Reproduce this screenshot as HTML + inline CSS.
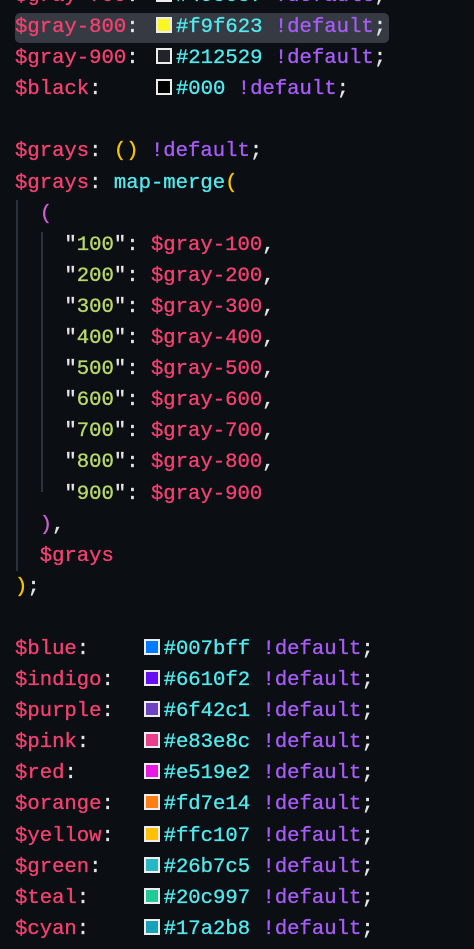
<!DOCTYPE html>
<html><head><meta charset="utf-8"><style>
html,body{margin:0;padding:0;background:#0b0f14;width:474px;height:949px;overflow:hidden}
#c{position:absolute;left:0;top:-19px;width:474px;font-family:"Liberation Mono",monospace;font-size:20.6px;color:#e4e4e4;-webkit-text-stroke:0.35px currentColor}
.l{height:31.1px;line-height:31.1px;white-space:pre;padding-left:15px;position:relative}
.p{color:#f2416f}.c{color:#52e8ec}.u{color:#a65cf5}.y{color:#f7c600}.g{color:#b8d86a}.m{color:#c95ecd}.w{color:#e4e4e4}
.s{display:inline-block;width:12px;height:12px;border:2px solid #ececec;vertical-align:-1px;margin-left:5px;margin-right:4px;-webkit-text-stroke:0}
.hl{position:absolute;left:15px;top:32px;width:374px;height:30px;background:#363b43;border-radius:5px}
.g1{position:absolute;left:16px;top:219px;width:2px;height:371px;background:#2a323c}
.g2{position:absolute;left:41px;top:251px;width:2px;height:260px;background:#2a323c}
</style></head><body><div id="c">
<div class="hl"></div><div class="g1"></div><div class="g2"></div>
<div class="l"><span class="p">$gray-700</span>: <span class="s" style="background:#495057"></span><span class="c">#495057</span> <span class="u">!default</span>;</div>
<div class="l"><span class="p">$gray-800</span>: <span class="s" style="background:#f9f623"></span><span class="c">#f9f623</span> <span class="u">!default</span>;</div>
<div class="l"><span class="p">$gray-900</span>: <span class="s" style="background:#212529"></span><span class="c">#212529</span> <span class="u">!default</span>;</div>
<div class="l"><span class="p">$black</span>:    <span class="s" style="background:#000"></span><span class="c">#000</span> <span class="u">!default</span>;</div>
<div class="l"> </div>
<div class="l"><span class="p">$grays</span>: <span class="y">()</span> <span class="u">!default</span>;</div>
<div class="l"><span class="p">$grays</span>: <span class="c">map-merge</span><span class="y">(</span></div>
<div class="l">  <span class="m">(</span></div>
<div class="l">    "<span class="g">100</span>": <span class="p">$gray-100</span>,</div>
<div class="l">    "<span class="g">200</span>": <span class="p">$gray-200</span>,</div>
<div class="l">    "<span class="g">300</span>": <span class="p">$gray-300</span>,</div>
<div class="l">    "<span class="g">400</span>": <span class="p">$gray-400</span>,</div>
<div class="l">    "<span class="g">500</span>": <span class="p">$gray-500</span>,</div>
<div class="l">    "<span class="g">600</span>": <span class="p">$gray-600</span>,</div>
<div class="l">    "<span class="g">700</span>": <span class="p">$gray-700</span>,</div>
<div class="l">    "<span class="g">800</span>": <span class="p">$gray-800</span>,</div>
<div class="l">    "<span class="g">900</span>": <span class="p">$gray-900</span></div>
<div class="l">  <span class="m">)</span>,</div>
<div class="l">  <span class="p">$grays</span></div>
<div class="l"><span class="y">)</span>;</div>
<div class="l"> </div>
<div class="l"><span class="p">$blue</span>:    <span class="s" style="background:#007bff"></span><span class="c">#007bff</span> <span class="u">!default</span>;</div>
<div class="l"><span class="p">$indigo</span>:  <span class="s" style="background:#6610f2"></span><span class="c">#6610f2</span> <span class="u">!default</span>;</div>
<div class="l"><span class="p">$purple</span>:  <span class="s" style="background:#6f42c1"></span><span class="c">#6f42c1</span> <span class="u">!default</span>;</div>
<div class="l"><span class="p">$pink</span>:    <span class="s" style="background:#e83e8c"></span><span class="c">#e83e8c</span> <span class="u">!default</span>;</div>
<div class="l"><span class="p">$red</span>:     <span class="s" style="background:#e519e2"></span><span class="c">#e519e2</span> <span class="u">!default</span>;</div>
<div class="l"><span class="p">$orange</span>:  <span class="s" style="background:#fd7e14"></span><span class="c">#fd7e14</span> <span class="u">!default</span>;</div>
<div class="l"><span class="p">$yellow</span>:  <span class="s" style="background:#ffc107"></span><span class="c">#ffc107</span> <span class="u">!default</span>;</div>
<div class="l"><span class="p">$green</span>:   <span class="s" style="background:#26b7c5"></span><span class="c">#26b7c5</span> <span class="u">!default</span>;</div>
<div class="l"><span class="p">$teal</span>:    <span class="s" style="background:#20c997"></span><span class="c">#20c997</span> <span class="u">!default</span>;</div>
<div class="l"><span class="p">$cyan</span>:    <span class="s" style="background:#17a2b8"></span><span class="c">#17a2b8</span> <span class="u">!default</span>;</div>
</div></body></html>
